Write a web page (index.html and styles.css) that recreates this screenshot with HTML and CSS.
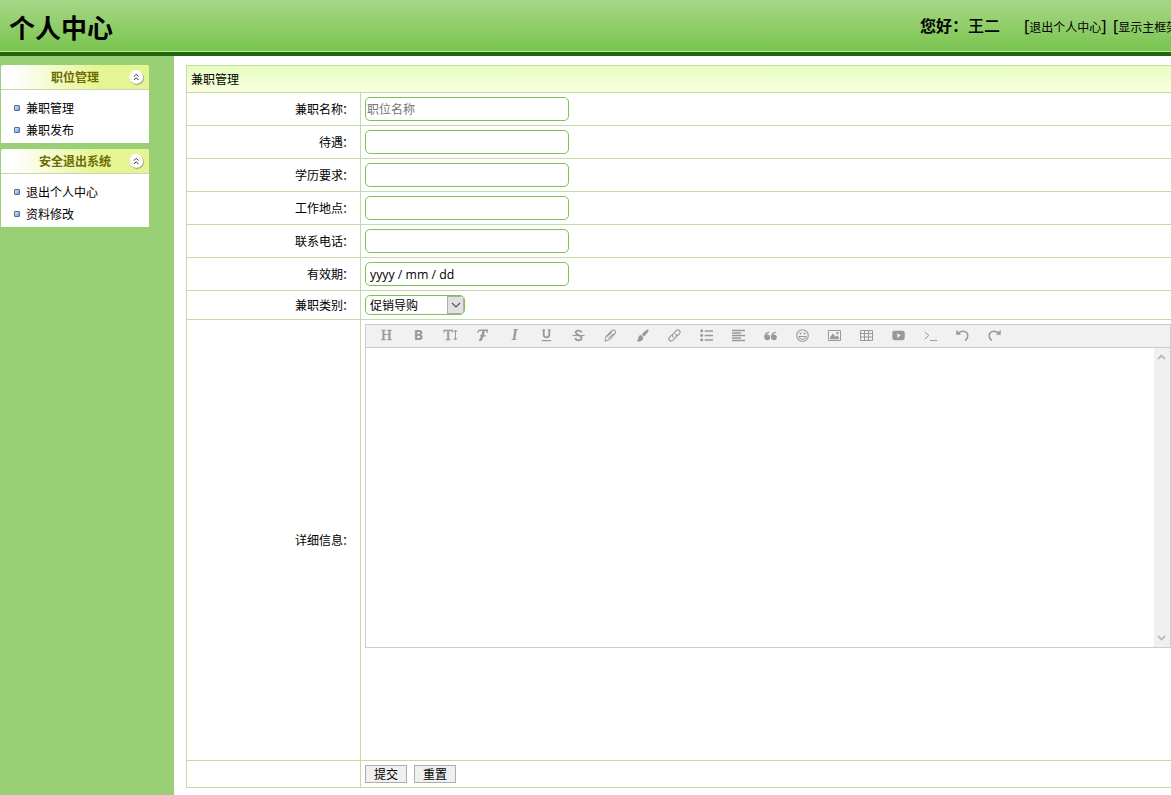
FILE: index.html
```
<!DOCTYPE html>
<html lang="zh-CN">
<head>
<meta charset="utf-8">
<title>个人中心</title>
<link rel="stylesheet" href="styles.css">
</head>
<body>
<header class="top">
  <h1>个人中心</h1>
  <div class="user"><b>您好：<span>王二</span></b><span class="links"><i>[</i>退出个人中心<i>]</i></span><span class="links second"><i>[</i>显示主框架<i>]</i></span></div>
</header>
<div class="layout">
  <aside class="sidebar">
    <section class="panel">
      <h2><span>职位管理</span><svg class="fold" viewBox="0 0 18 18"><circle cx="10" cy="10" r="7.2" fill="#777" opacity=".5"/><circle cx="9.2" cy="8.9" r="6.9" fill="#fff"/><path d="M6.9 8.6l2.3-2.3 2.3 2.3M6.9 12l2.3-2.3 2.3 2.3"/></svg></h2>
      <ul><li>兼职管理</li><li>兼职发布</li></ul>
    </section>
    <section class="panel">
      <h2><span>安全退出系统</span><svg class="fold" viewBox="0 0 18 18"><circle cx="10" cy="10" r="7.2" fill="#777" opacity=".5"/><circle cx="9.2" cy="8.9" r="6.9" fill="#fff"/><path d="M6.9 8.6l2.3-2.3 2.3 2.3M6.9 12l2.3-2.3 2.3 2.3"/></svg></h2>
      <ul><li>退出个人中心</li><li>资料修改</li></ul>
    </section>
  </aside>
  <main class="content">
    <form class="sheet">
      <div class="caption">兼职管理</div>
      <div class="row"><label>兼职名称<span>：</span></label><div class="cell"><input type="text" placeholder="职位名称"></div></div>
      <div class="row"><label>待遇<span>：</span></label><div class="cell"><input type="text"></div></div>
      <div class="row"><label>学历要求<span>：</span></label><div class="cell"><input type="text"></div></div>
      <div class="row"><label>工作地点<span>：</span></label><div class="cell"><input type="text"></div></div>
      <div class="row"><label>联系电话<span>：</span></label><div class="cell"><input type="text"></div></div>
      <div class="row"><label>有效期<span>：</span></label><div class="cell"><div class="date">yyyy / mm / dd</div></div></div>
      <div class="row pick"><label>兼职类别<span>：</span></label><div class="cell"><div class="select"><span>促销导购</span><div class="drop"><svg viewBox="0 0 10 6"><path d="M1 1l4 4 4-4"/></svg></div></div></div></div>
      <div class="row detail"><label>详细信息<span>：</span></label><div class="cell">
        <div class="editor">
          <div class="tools">
            <div class="tool"><span class="serif">H</span></div>
            <div class="tool"><span class="sans">B</span></div>
            <div class="tool"><span class="serif">T</span><svg class="updown" viewBox="0 0 5 12"><path d="M2.5 1v10M.6 3l1.9-2 1.9 2M.6 9l1.9 2 1.9-2"/></svg></div>
            <div class="tool"><svg viewBox="0 0 14 14"><path d="M2.3 4C1.8 2 3.2 1.4 5 1.4h7.3L11.5 4M4.5 7.2h5.8" stroke-width="1.5"/><path d="M8.3 2L6.6 8.5c-.5 2-1.2 3.3-3 4.2" stroke-width="2.6"/></svg></div>
            <div class="tool"><span class="serif slant">I</span></div>
            <div class="tool"><svg viewBox="0 0 14 14"><path d="M4 1v5.5C4 9.7 10 9.7 10 6.5V1" stroke-width="1.9"/><path d="M2.5 1h3M8.5 1h3M2 12.6h10" stroke-width="1.3"/></svg></div>
            <div class="tool"><svg viewBox="0 0 14 14"><path d="M10.4 3.8C9.5.9 4 1 4 3.9c0 3 6.3 2.3 6.3 5.6 0 3.4-6 3.6-6.7.2" stroke-width="1.9"/><path d="M.5 7h13" stroke-width="1.2"/></svg></div>
            <div class="tool"><svg viewBox="0 0 14 14"><path d="M1.2 13l.9-5L9 1.4c2-.8 4.2 1 3.4 3L6 11.5z M2.9 8.3l5.5-5M4.8 10l5.5-5" stroke-width="1.1"/></svg></div>
            <div class="tool"><svg viewBox="0 0 14 14"><path d="M13.4.7c.9.9-1 3.6-4.9 7.4L6.1 5.8C10 1.8 12.5-.1 13.4.7zM5.3 6.5l2.4 2.3C8.2 12.5 4.8 14.6.4 12.8c2-.4 1.6-1.6 2-3.2.4-1.9 1.5-3 2.9-3.1z" fill="#999" stroke="none"/></svg></div>
            <div class="tool"><svg viewBox="0 0 14 14"><path d="M5.9 8.9C4.3 7.5 4.7 6 5.7 5l3-3c2.7-2.4 5.8.7 3.5 3.3L9.8 7.7M8.1 5.1C9.7 6.5 9.3 8 8.3 9l-3 3c-2.7 2.4-5.8-.7-3.5-3.3l2.4-2.4" stroke-width="1.25"/></svg></div>
            <div class="tool"><svg viewBox="0 0 14 14"><path d="M5 2.2h9M5 7h9M5 11.8h9"/><g fill="#999" stroke="none"><circle cx="1.8" cy="2.2" r="1.6"/><circle cx="1.8" cy="7" r="1.6"/><circle cx="1.8" cy="11.8" r="1.6"/></g></svg></div>
            <div class="tool"><svg viewBox="0 0 13 13"><path d="M0 1.5h13M0 4h9M0 6.5h13M0 9h9M0 11.5h13" stroke-width="1.4"/></svg></div>
            <div class="tool"><svg viewBox="0 0 14 14"><g fill="#999" stroke="none"><circle cx="3.5" cy="9" r="3.1"/><circle cx="10.7" cy="9" r="3.1"/></g><path d="M1.1 8.8c0-3 1.5-4.9 4.4-5.4M8.3 8.8c0-3 1.5-4.9 4.4-5.4" stroke-width="1.5"/></svg></div>
            <div class="tool"><svg viewBox="0 0 14 14"><circle cx="7" cy="7" r="6.2" stroke-width="1.2"/><path d="M3.3 8.1h7.4C9.9 12 4.1 12 3.3 8.1z" stroke-width="1.1"/><g fill="#999" stroke="none"><circle cx="4.8" cy="4.8" r="1.1"/><circle cx="9.2" cy="4.8" r="1.1"/></g></svg></div>
            <div class="tool"><svg viewBox="0 0 13 13"><path d="M.5 1.5h12v10H.5z" stroke-width="1"/><path d="M2 10.2V8.5l2.8-4L7.5 7.8l1.5-1.2 2 2v1.6z" fill="#999" stroke="none"/><circle cx="9.5" cy="4" r="1.2" fill="#999" stroke="none"/></svg></div>
            <div class="tool"><svg viewBox="0 0 13 13"><path d="M.5 1.5h12v10H.5zM.5 4.5h12M.5 8h12M4.5 1.5v10M8.5 1.5v10" stroke-width="1"/></svg></div>
            <div class="tool"><svg viewBox="0 0 14 14"><rect x=".3" y="2" width="13.4" height="10" rx="2.3" fill="#999" stroke="none"/><path d="M5.6 4.5v5l4-2.5z" fill="#f1f1f1" stroke="none"/></svg></div>
            <div class="tool"><svg viewBox="0 0 13 13"><path d="M.8 3l4 3.5-4 3.5M6 11.5h7" stroke-width="1"/></svg></div>
            <div class="tool"><svg viewBox="0 0 14 14"><path d="M2 4.6C8 .5 12.9 3 12.7 7.4c-.1 2.2-1.1 3.7-2.8 5.1" stroke-width="1.6"/><path d="M.3.9v5.3h5.3z" fill="#999" stroke="none"/></svg></div>
            <div class="tool"><svg viewBox="0 0 14 14"><path d="M12 4.6C6 .5 1.1 3 1.3 7.4c.1 2.2 1.1 3.7 2.8 5.1" stroke-width="1.6"/><path d="M13.7.9v5.3H8.4z" fill="#999" stroke="none"/></svg></div>
          </div>
          <div class="page"><div class="scroll"><svg viewBox="0 0 9 6"><path d="M1 5l3.5-3.5L8 5"/></svg><svg viewBox="0 0 9 6"><path d="M1 1l3.5 3.5L8 1"/></svg></div></div>
        </div>
      </div></div>
      <div class="row actions"><label></label><div class="cell"><button type="button">提交</button><button type="button">重置</button></div></div>
    </form>
  </main>
</div>
</body>
</html>
```
FILE: styles.css
```
* { box-sizing: border-box; }
body {
  margin: 0;
  height: 795px;
  overflow: hidden;
  display: flex;
  flex-direction: column;
  background: #fff;
  color: #000;
  font: 12px/18px "Noto Sans CJK SC", sans-serif;
}
.top {
  height: 56px;
  flex: none;
  display: flex;
  justify-content: space-between;
  border-bottom: 4px solid #22650f;
  background: linear-gradient(#a8d786, #79c450 51px, #baf096 51px);
}
h1 { margin: 8px 0 0 9px; font-size: 26px; line-height: 37px; }
.user { width: 251px; display: flex; white-space: nowrap; overflow: hidden; padding-top: 12px; line-height: 26px; }
.user b { width: 104px; flex: none; font-size: 16px; font-weight: 700; }
.user b span { font-weight: 500; }
.links { width: 89px; line-height: 29px; flex: none; }
.links i { font: 16px/24px "Noto Sans", sans-serif; }
.layout { flex: 1; display: flex; min-height: 0; }
.sidebar { width: 174px; flex: none; padding: 9px 25px 0 1px; background: #99d075; }
.panel { height: 78px; margin-bottom: 6px; background: #fff; border-radius: 3px 3px 0 0; }
.panel h2 {
  margin: 0;
  height: 25px;
  display: flex;
  align-items: center;
  border-bottom: 1px solid #ccd6ad;
  border-radius: 3px 3px 0 0;
  background: linear-gradient(90deg, #fff 12px, #e6f594 95px);
  color: #6b6b00;
  font-size: 12px;
  line-height: 24px;
}
.panel h2 span { flex: 1; text-align: center; padding-left: 22px; }
.fold { width: 18px; height: 18px; margin-right: 4px; fill: none; stroke-width: 1; }
.fold path { stroke: #333; }
.panel ul { list-style: none; margin: 0; padding: 7px 0 0 13px; line-height: 22px; }
.panel li { display: flex; align-items: center; gap: 6px; }
.panel li::before { content: ""; width: 6px; height: 6px; box-sizing: border-box; border: 1px solid #53678f; border-radius: 1px; background: linear-gradient(135deg, #d5e6ff, #6b9ee8); }
.content { flex: 1; min-width: 0; padding: 9px 0 0 12px; }
.sheet { border: 1px solid #c9d8a4; border-width: 1px 0 0 1px; }
.caption { height: 27px; padding-left: 4px; line-height: 25px; background: linear-gradient(#e5fdc0, #faffde); border-bottom: 1px solid #c9d8a4; }
.row { height: 33px; display: flex; border-bottom: 1px solid #c9d8a4; }
.row label { width: 174px; flex: none; display: flex; align-items: center; justify-content: flex-end; padding-right: 6px; border-right: 1px solid #c9d8a4; }
.row label span { width: 11px; text-indent: -1px; }
.cell { flex: 1; min-width: 0; padding: 4px 0 0 4px; }
.cell input, .date { display: block; width: 204px; height: 24px; padding: 0 1px 1px; border: 1px solid #7bc354; border-radius: 5px; background: #fff; font: 12px/21px "Noto Sans CJK SC", sans-serif; }
.cell input::placeholder { color: #757575; opacity: 1; }
.date { padding-left: 4px; font: 12.3px/24px "Open Sans", sans-serif; }
.pick { height: 29px; }
.select { width: 100px; height: 20px; display: flex; justify-content: space-between; padding-left: 4px; border: 1px solid #7bc354; border-radius: 5px; line-height: 18px; overflow: hidden; }
.drop { width: 17px; display: flex; align-items: center; justify-content: center; background: #e1e1e1; border: 1px solid #adadad; }
.drop svg { width: 10px; height: 6px; fill: none; stroke: #555; stroke-width: 1.2; flex: none; }
.detail { height: 441px; }
.editor { height: 324px; display: flex; flex-direction: column; border: 1px solid #ccc; }
.tools { height: 23px; display: flex; padding-left: 4.5px; background: #f1f1f1; border-bottom: 1px solid #ccc; }
.tool { width: 32px; height: 20px; display: flex; align-items: center; justify-content: center; color: #999; }
.tool svg { width: 13px; height: 13px; fill: none; stroke: #999; stroke-width: 1.5; }
.tool .updown { width: 5px; height: 12px; stroke-width: 1; }
.serif { font: bold 15px/20px "Liberation Serif", serif; }
.tool:nth-child(-n+3) .serif { font-weight: normal; -webkit-text-stroke: .5px #999; }
.tool .slant { font-style: italic; font-size: 16px; }
.sans { font: bold 14px/20px "Open Sans", sans-serif; }
.page { flex: 1; display: flex; justify-content: flex-end; }
.scroll { width: 16px; display: flex; flex-direction: column; align-items: center; justify-content: space-between; padding: 6px 2px 6px 0; background: #f0f0f0; }
.scroll svg { width: 9px; height: 6px; fill: none; stroke: #bababa; stroke-width: 1.8; }
.actions { height: 27px; }
.actions .cell { display: flex; gap: 7px; }
button { width: 42px; height: 18px; padding: 0; border: 1px solid #adadad; background: #f0f0f0; color: #000; font: 12px/16px "Noto Sans CJK SC", sans-serif; }
.panel li::before { flex: none; }
```
